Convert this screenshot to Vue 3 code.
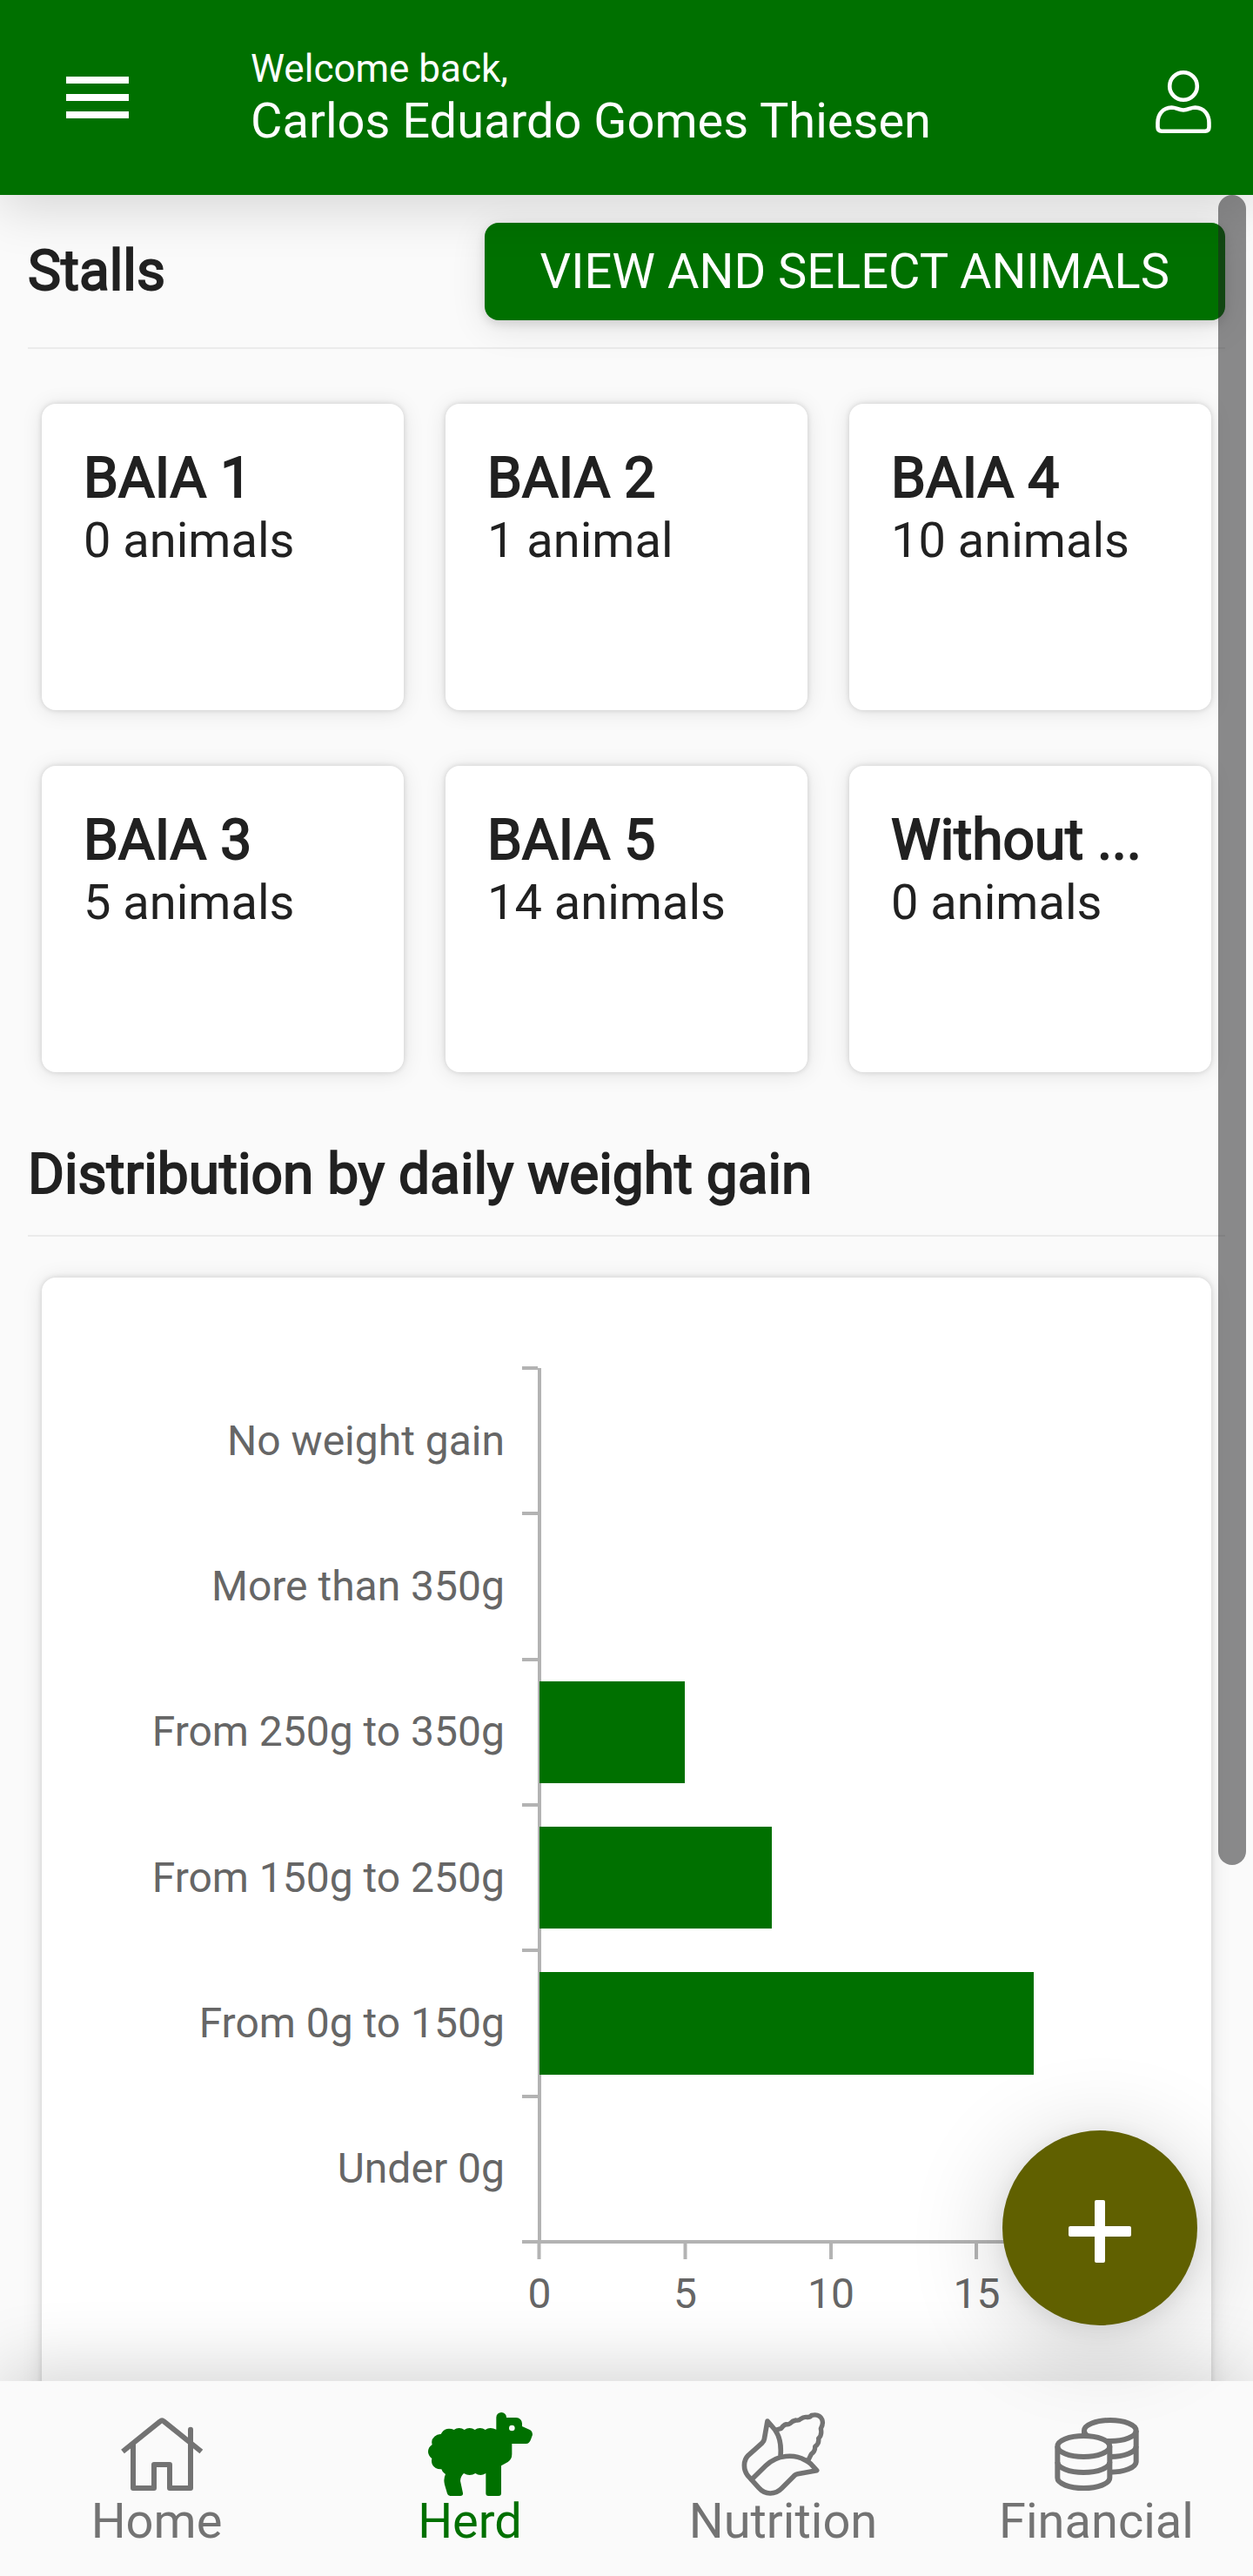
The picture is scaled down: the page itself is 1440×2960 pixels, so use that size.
<script setup>
const stalls = [
  { name: 'BAIA 1', count: '0 animals' },
  { name: 'BAIA 2', count: '1 animal' },
  { name: 'BAIA 4', count: '10 animals' },
  { name: 'BAIA 3', count: '5 animals' },
  { name: 'BAIA 5', count: '14 animals' },
  { name: 'Without ...', count: '0 animals' }
]

const scaleMax = 20
const ticks = [0, 5, 10, 15, 20]
const gains = [
  { label: 'No weight gain', value: 0 },
  { label: 'More than 350g', value: 0 },
  { label: 'From 250g to 350g', value: 5 },
  { label: 'From 150g to 250g', value: 8 },
  { label: 'From 0g to 150g', value: 17 },
  { label: 'Under 0g', value: 0 }
]
const percent = (value) => `${(value / scaleMax) * 100}%`
</script>

<template>
  <div class="shell">
    <header class="topbar">
      <button class="icon-button" type="button" aria-label="Menu">
        <svg viewBox="0 0 24 24" fill="currentColor"><path d="M3 18h18v-2H3v2zm0-5h18v-2H3v2zm0-7v2h18V6H3z" /></svg>
      </button>
      <div class="greeting">
        <p class="welcome">Welcome back,</p>
        <p class="user-name">Carlos Eduardo Gomes Thiesen</p>
      </div>
      <button class="icon-button" type="button" aria-label="Profile">
        <svg viewBox="0 0 96 96" fill="none" stroke="currentColor" stroke-width="4.6">
          <circle cx="48" cy="35" r="15.8" />
          <path d="M34.5 59.5C40 59.500 42 62.500 48 62.500C54 62.500 56 59.500 61.500 59.500C71.500 60 77.500 67 77.500 77V82Q77.500 86.700 73 86.700H23Q18.500 86.700 18.500 82V77C18.500 67 24.500 60 34.500 59.500Z" />
        </svg>
      </button>
    </header>

    <div class="viewport">
      <main class="content">
        <section>
          <div class="section-head">
            <h2>Stalls</h2>
            <button class="primary" type="button">VIEW AND SELECT ANIMALS</button>
          </div>
          <div class="stalls">
            <article v-for="stall in stalls" :key="stall.name" class="card stall">
              <h3>{{ stall.name }}</h3>
              <p>{{ stall.count }}</p>
            </article>
          </div>
        </section>

        <section>
          <div class="section-head">
            <h2>Distribution by daily weight gain</h2>
          </div>
          <div class="card chart-card">
            <div class="rows">
              <div v-for="gain in gains" :key="gain.label" class="row">
                <span class="row-label">{{ gain.label }}</span>
                <div class="track">
                  <div class="bar" :style="{ width: percent(gain.value) }"></div>
                </div>
              </div>
            </div>
            <div class="axis">
              <div class="scale">
                <span v-for="tick in ticks" :key="tick" class="tick" :style="{ left: percent(tick) }">{{ tick }}</span>
              </div>
            </div>
          </div>
        </section>
      </main>
      <div class="thumb"></div>
      <button class="fab" type="button" aria-label="Add">
        <svg viewBox="0 0 224 224" fill="#fff">
          <rect x="76" y="110" width="72" height="12" rx="2" />
          <rect x="106" y="80" width="12" height="72" rx="2" />
        </svg>
      </button>
    </div>

    <nav class="tabs">
      <a href="#home">
        <svg viewBox="324 156 432 288" fill="none" stroke="currentColor" stroke-width="18" stroke-linejoin="round">
          <path d="M459 262V417H531V336H585V417H657V216" />
          <path d="M657 216v-1" stroke-linecap="round" />
          <path d="M423 291L552 187Q558.500 181 565 187L694 291" />
        </svg>
        Home
      </a>
      <a href="#herd" class="active" aria-current="page">
        <svg viewBox="204 156 432 288" fill="currentColor">
          <path d="M511 215V173a17.500 17.500 0 0 1 35 1H580a20 20 0 0 1 20 20V204L628 217q8 5 8 16L630 250q-5 14-16 14H565V300q0 18-14 27L528 340V435q0 9-9 9H484q-9 0-9-9V366q-10 6-18 6q-10 0-18-6q-9 6-20 6q-10 0-20-6Q387 378 387 392L396 434q1 10-9 10H352q-8 0-10-8L333 405q-5-20 3-36Q326 363 322 352Q300 353 291 337Q286 326 289 315Q276 305 276 292Q276 276 290 267Q285 250 298 239Q308 230 320 231Q330 212 348 212q10 0 17 4q8-6 18-6q10 0 18 6q8-6 18-6q10 0 18 6q8-6 18-6q10 0 18 6q8-6 18-6q10 0 20 5Z" />
          <circle cx="565" cy="210" r="10" fill="#fafafa" />
        </svg>
        Herd
      </a>
      <a href="#nutrition">
        <svg viewBox="204 156 432 288" fill="none" stroke="currentColor" stroke-width="17" stroke-linejoin="round">
          <path d="M311 388L298 374C282 352 282 322 300 304L347 262Q354 256 355 248L366 186L392 216Q416 250 411 306" />
          <path d="M311 388L360 340C400 300 460 300 495 320Q508 326 516 334L536 356L470 368Q465 369 460 373L415 418C392 441 358 441 336 416Z" />
          <path d="M397 216L414 211Q420 200 431 197Q438 199 444 194Q452 185 464 183Q474 185 480 179Q490 171 500 172Q512 174 518 166Q545 160 554 180Q560 195 550 212Q555 234 542 246Q545 264 530 274Q531 290 517 300L506 322" stroke-width="16" />
        </svg>
        Nutrition
      </a>
      <a href="#financial">
        <svg viewBox="204 156 432 288" fill="none" stroke="currentColor" stroke-width="18">
          <path d="M378 240V219A89.500 36 0 0 1 557 219V327A89.500 36 0 0 1 467 362" />
          <path d="M557 219A89.500 36 0 0 1 378 219M557 273A89.500 36 0 0 1 467 309" />
          <path d="M286 273A90 36 0 0 1 466 273V382A90 35 0 0 1 286 382Z" fill="#fafafa" />
          <path d="M286 273A90 36 0 0 0 466 273M286 327A90 36 0 0 0 466 327" />
        </svg>
        Financial
      </a>
    </nav>
  </div>
</template>

<style>
body {
  margin: 0;
  background: #fafafa;
}
</style>

<style scoped>
.shell {
  display: flex;
  flex-direction: column;
  height: 100vh;
  background: #fafafa;
  color: #212121;
  font-family: Roboto, "Liberation Sans", sans-serif;
  font-size: 56px;
}

h2,
h3,
p {
  margin: 0;
}

button {
  border: 0;
  padding: 0;
  font: inherit;
  color: #fff;
  cursor: pointer;
}

svg {
  display: block;
}

.topbar {
  position: relative;
  z-index: 2;
  flex: none;
  display: flex;
  align-items: center;
  box-sizing: border-box;
  height: 224px;
  padding: 0 32px 0 64px;
  background: #007000;
  color: #fff;
  box-shadow: 0 16px 56px rgba(0, 0, 0, 0.14);
}

.icon-button {
  flex: none;
  width: 96px;
  height: 96px;
  background: none;
}

.greeting {
  flex: 1;
  padding-left: 128px;
}

.welcome {
  font-size: 44px;
  line-height: 54px;
}

.user-name {
  line-height: 66px;
}

.viewport {
  position: relative;
  flex: 1;
  min-height: 0;
}

.content {
  height: 100%;
  overflow-y: auto;
  scrollbar-width: none;
}

.section-head {
  display: flex;
  align-items: center;
  justify-content: space-between;
  margin: 0 32px;
  padding: 32px 0 31px;
  border-bottom: 2px solid #ebebeb;
}

h2,
h3 {
  font-size: 64px;
  line-height: 76px;
  font-weight: 400;
  -webkit-text-stroke: 2px currentColor;
}

.primary {
  height: 112px;
  padding: 0 64px;
  border-radius: 16px;
  background: #007000;
  box-shadow: 0 8px 40px rgba(0, 0, 0, 0.1), 0 4px 12px rgba(0, 0, 0, 0.12);
}

.stalls {
  display: grid;
  grid-template-columns: repeat(3, minmax(0, 1fr));
  gap: 64px 48px;
  padding: 63px 48px 48px;
}

.card {
  border-radius: 16px;
  background: #fff;
  box-shadow: 0 0 6px rgba(0, 0, 0, 0.14), 0 2px 24px rgba(0, 0, 0, 0.1);
}

.stall {
  box-sizing: border-box;
  min-height: 352px;
  padding: 48px;
}

.stall h3 {
  white-space: nowrap;
}

.stall p {
  line-height: 66px;
}

.chart-card {
  margin: 47px 48px 48px;
  padding: 104px 102px 160px 0;
  font-size: 48px;
  line-height: 56px;
  color: #666;
}

.rows {
  display: grid;
  grid-template-rows: repeat(6, 1fr);
  height: 1004px;
}

.row {
  display: grid;
  grid-template-columns: 570px 1fr;
}

.row-label {
  position: relative;
  display: flex;
  align-items: center;
  justify-content: flex-end;
  padding-right: 38px;
}

.row-label::after {
  content: "";
  position: absolute;
  top: -2px;
  right: 0;
  width: 18px;
  height: 4px;
  background: #b3b3b3;
}

.track {
  display: flex;
  align-items: center;
  border-left: 4px solid #b3b3b3;
}

.bar {
  height: 70%;
  margin-left: -2px;
  background: #007000;
}

.axis {
  margin: -2px 0 0 552px;
  padding-left: 20px;
  border-top: 4px solid #b3b3b3;
}

.scale {
  position: relative;
  height: 86px;
}

.tick {
  position: absolute;
  top: 0;
  padding-top: 30px;
  transform: translateX(-50%);
}

.tick::before {
  content: "";
  position: absolute;
  top: 0;
  left: calc(50% - 2px);
  width: 4px;
  height: 18px;
  background: #b3b3b3;
}

.thumb {
  position: absolute;
  z-index: 3;
  top: 0;
  right: 8px;
  width: 32px;
  height: 76.4%;
  border-radius: 16px;
  background: rgba(32, 32, 34, 0.52);
}

.fab {
  position: absolute;
  z-index: 4;
  right: 64px;
  bottom: 64px;
  width: 224px;
  height: 224px;
  border-radius: 50%;
  background: #606000;
  box-shadow: 0 16px 112px rgba(0, 0, 0, 0.2), 0 4px 24px rgba(0, 0, 0, 0.08);
}

.tabs {
  position: relative;
  z-index: 1;
  flex: none;
  display: grid;
  grid-template-columns: repeat(4, 1fr);
  background: #fafafa;
  box-shadow: 0 -16px 80px rgba(0, 0, 0, 0.16);
}

.tabs a {
  display: flex;
  flex-direction: column;
  align-items: center;
  padding: 36px 0 34px;
  line-height: 58px;
  color: #737373;
  text-decoration: none;
}

.tabs .active {
  color: #007000;
}

.tabs svg {
  width: 144px;
  height: 96px;
}
</style>
